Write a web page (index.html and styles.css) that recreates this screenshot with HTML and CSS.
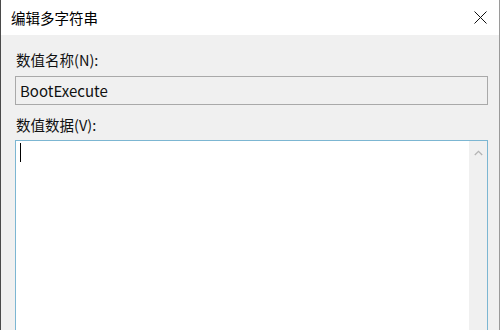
FILE: index.html
```html
<!DOCTYPE html>
<html lang="zh-CN">
<head>
<meta charset="utf-8">
<title>编辑多字符串</title>
<link rel="stylesheet" href="styles.css">
</head>
<body>
<div class="dialog">
  <div class="titlebar">
    <span class="title">编辑多字符串</span>
    <svg class="close" width="13" height="13" viewBox="0 0 13 13" aria-label="关闭">
      <path d="M0.5 0.5 L12.5 12.5 M12.5 0.5 L0.5 12.5" stroke="#111" stroke-width="1" fill="none"/>
    </svg>
  </div>
  <div class="content">
    <div class="label">数值名称(N):</div>
    <div class="field">BootExecute</div>
    <div class="label label-data">数值数据(V):</div>
    <div class="textarea">
      <div class="text"><span class="caret"></span></div>
      <div class="scrollbar">
        <svg class="arrow" width="9" height="6" viewBox="0 0 9 6">
          <path d="M0.8 5 L4.5 1.3 L8.2 5" stroke="#b4b4b4" stroke-width="1.3" fill="none"/>
        </svg>
      </div>
    </div>
  </div>
</div>
</body>
</html>
```

FILE: styles.css
```css
html, body {
  margin: 0;
  padding: 0;
  background: #ffffff;
}
body {
  width: 501px;
  height: 330px;
  overflow: hidden;
  font-family: "Noto Sans CJK SC", "Noto Sans", sans-serif;
  color: #000;
}
.dialog {
  width: 500px;
  height: 330px;
  box-sizing: border-box;
  border-left: 1px solid #4a4a4a;
  border-right: 1px solid #9a9a9a;
  display: flex;
  flex-direction: column;
}
.titlebar {
  height: 35px;
  flex: none;
  background: #ffffff;
  display: flex;
  align-items: center;
  padding-left: 10px;
  padding-right: 12px;
}
.title {
  font-size: 14.5px;
  line-height: 20px;
  flex: 1;
}
.close {
  display: block;
}
.content {
  flex: 1;
  background: #f0f0f0;
  padding: 0 11px 0 14px;
  display: flex;
  flex-direction: column;
  overflow: hidden;
}
.label {
  font-size: 14.5px;
  line-height: 20px;
  margin-top: 15px;
  padding-left: 1px;
  color: #111;
}
.label-data {
  margin-top: 10px;
}
.field {
  margin-top: 6px;
  height: 29px;
  box-sizing: border-box;
  border: 1px solid #a9a9a9;
  background: #f0f0f0;
  font-size: 15px;
  line-height: 27px;
  padding-left: 4px;
  color: #111;
}
.textarea {
  margin-top: 5px;
  height: 220px;
  flex: none;
  box-sizing: border-box;
  border: 1px solid #7cb6d2;
  background: #ffffff;
  display: flex;
}
.text {
  flex: 1;
  padding: 2px 4px;
}
.caret {
  display: block;
  width: 1px;
  height: 19px;
  background: #000;
}
.scrollbar {
  width: 18px;
  background: #f0f0f0;
  display: flex;
  justify-content: center;
  padding-top: 9px;
  box-sizing: border-box;
}
.arrow {
  display: block;
}
```
